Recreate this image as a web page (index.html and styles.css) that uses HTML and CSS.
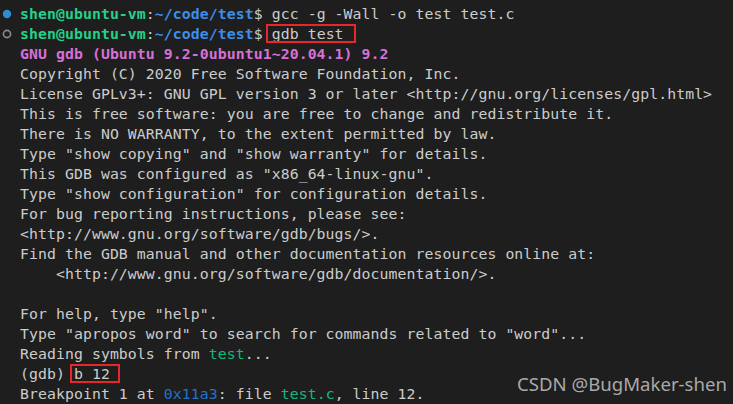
FILE: index.html
```html
<!DOCTYPE html>
<html>
<head>
<meta charset="utf-8">
<link rel="stylesheet" href="styles.css">
</head>
<body>
<div class="term">
  <div class="line"><span class="gutter"><svg width="20" height="20" viewBox="0 0 20 20"><circle cx="7" cy="10" r="4.2" fill="#2a8fd1"/></svg></span><span class="txt"><span class="user">shen@ubuntu-vm</span>:<span class="path">~/code/test</span>$ gcc -g -Wall -o test test.c</span></div>
  <div class="line"><span class="gutter"><svg width="20" height="20" viewBox="0 0 20 20"><circle cx="7" cy="10" r="3.6" fill="none" stroke="#8c8c8c" stroke-width="1.6"/></svg></span><span class="txt"><span class="user">shen@ubuntu-vm</span>:<span class="path">~/code/test</span>$ <span class="mark mark-a">gdb test</span></span></div>
  <div class="line"><span class="gutter"></span><span class="txt magenta">GNU gdb (Ubuntu 9.2-0ubuntu1~20.04.1) 9.2</span></div>
  <div class="line"><span class="gutter"></span><span class="txt">Copyright (C) 2020 Free Software Foundation, Inc.</span></div>
  <div class="line"><span class="gutter"></span><span class="txt">License GPLv3+: GNU GPL version 3 or later &lt;http://gnu.org/licenses/gpl.html&gt;</span></div>
  <div class="line"><span class="gutter"></span><span class="txt">This is free software: you are free to change and redistribute it.</span></div>
  <div class="line"><span class="gutter"></span><span class="txt">There is NO WARRANTY, to the extent permitted by law.</span></div>
  <div class="line"><span class="gutter"></span><span class="txt">Type "show copying" and "show warranty" for details.</span></div>
  <div class="line"><span class="gutter"></span><span class="txt">This GDB was configured as "x86_64-linux-gnu".</span></div>
  <div class="line"><span class="gutter"></span><span class="txt">Type "show configuration" for configuration details.</span></div>
  <div class="line"><span class="gutter"></span><span class="txt">For bug reporting instructions, please see:</span></div>
  <div class="line"><span class="gutter"></span><span class="txt">&lt;http://www.gnu.org/software/gdb/bugs/&gt;.</span></div>
  <div class="line"><span class="gutter"></span><span class="txt">Find the GDB manual and other documentation resources online at:</span></div>
  <div class="line"><span class="gutter"></span><span class="txt">    &lt;http://www.gnu.org/software/gdb/documentation/&gt;.</span></div>
  <div class="line"><span class="gutter"></span><span class="txt"> </span></div>
  <div class="line"><span class="gutter"></span><span class="txt">For help, type "help".</span></div>
  <div class="line"><span class="gutter"></span><span class="txt">Type "apropos word" to search for commands related to "word"...</span></div>
  <div class="line"><span class="gutter"></span><span class="txt">Reading symbols from <span class="green">test</span>...</span></div>
  <div class="line"><span class="gutter"></span><span class="txt">(gdb) <span class="mark mark-b">b 12</span></span></div>
  <div class="line"><span class="gutter"></span><span class="txt">Breakpoint 1 at <span class="blue">0x11a3</span>: file <span class="green">test.c</span>, line 12.</span></div>
</div>
<div class="watermark">CSDN @BugMaker-shen</div>
</body>
</html>
```
FILE: styles.css
```css
html, body {
  margin: 0;
  padding: 0;
  background: #1e1e1e;
  width: 733px;
  height: 404px;
  overflow: hidden;
}
.term {
  padding-top: 4px;
  font-family: "DejaVu Sans Mono", "Liberation Mono", monospace;
  font-size: 14.8px;
  letter-spacing: 0.08px;
  color: #cccccc;
}
.line {
  display: flex;
  height: 20px;
  line-height: 20px;
}
.gutter {
  width: 20px;
  flex: none;
  display: flex;
  align-items: center;
}
.gutter svg { display: block; }
.txt { white-space: pre; }
.user { color: #23d18b; font-weight: bold; }
.path { color: #3b8eea; font-weight: bold; }
.magenta { color: #d670d6; font-weight: bold; }
.green { color: #0dbc79; }
.blue { color: #2472c8; }
.mark { position: relative; }
.mark::after {
  content: "";
  position: absolute;
  border: 2px solid #e8262b;
}
.mark-a::after { left: -6px; right: -12px; top: -1px; bottom: -1px; }
.mark-b::after { left: -4px; right: -10px; top: -1px; bottom: -1px; }
.watermark {
  position: absolute;
  left: 517px;
  top: 371px;
  font-family: "Noto Sans", "Liberation Sans", sans-serif;
  font-size: 18.6px;
  line-height: 26px;
  color: #a9a9a9;
}
```
